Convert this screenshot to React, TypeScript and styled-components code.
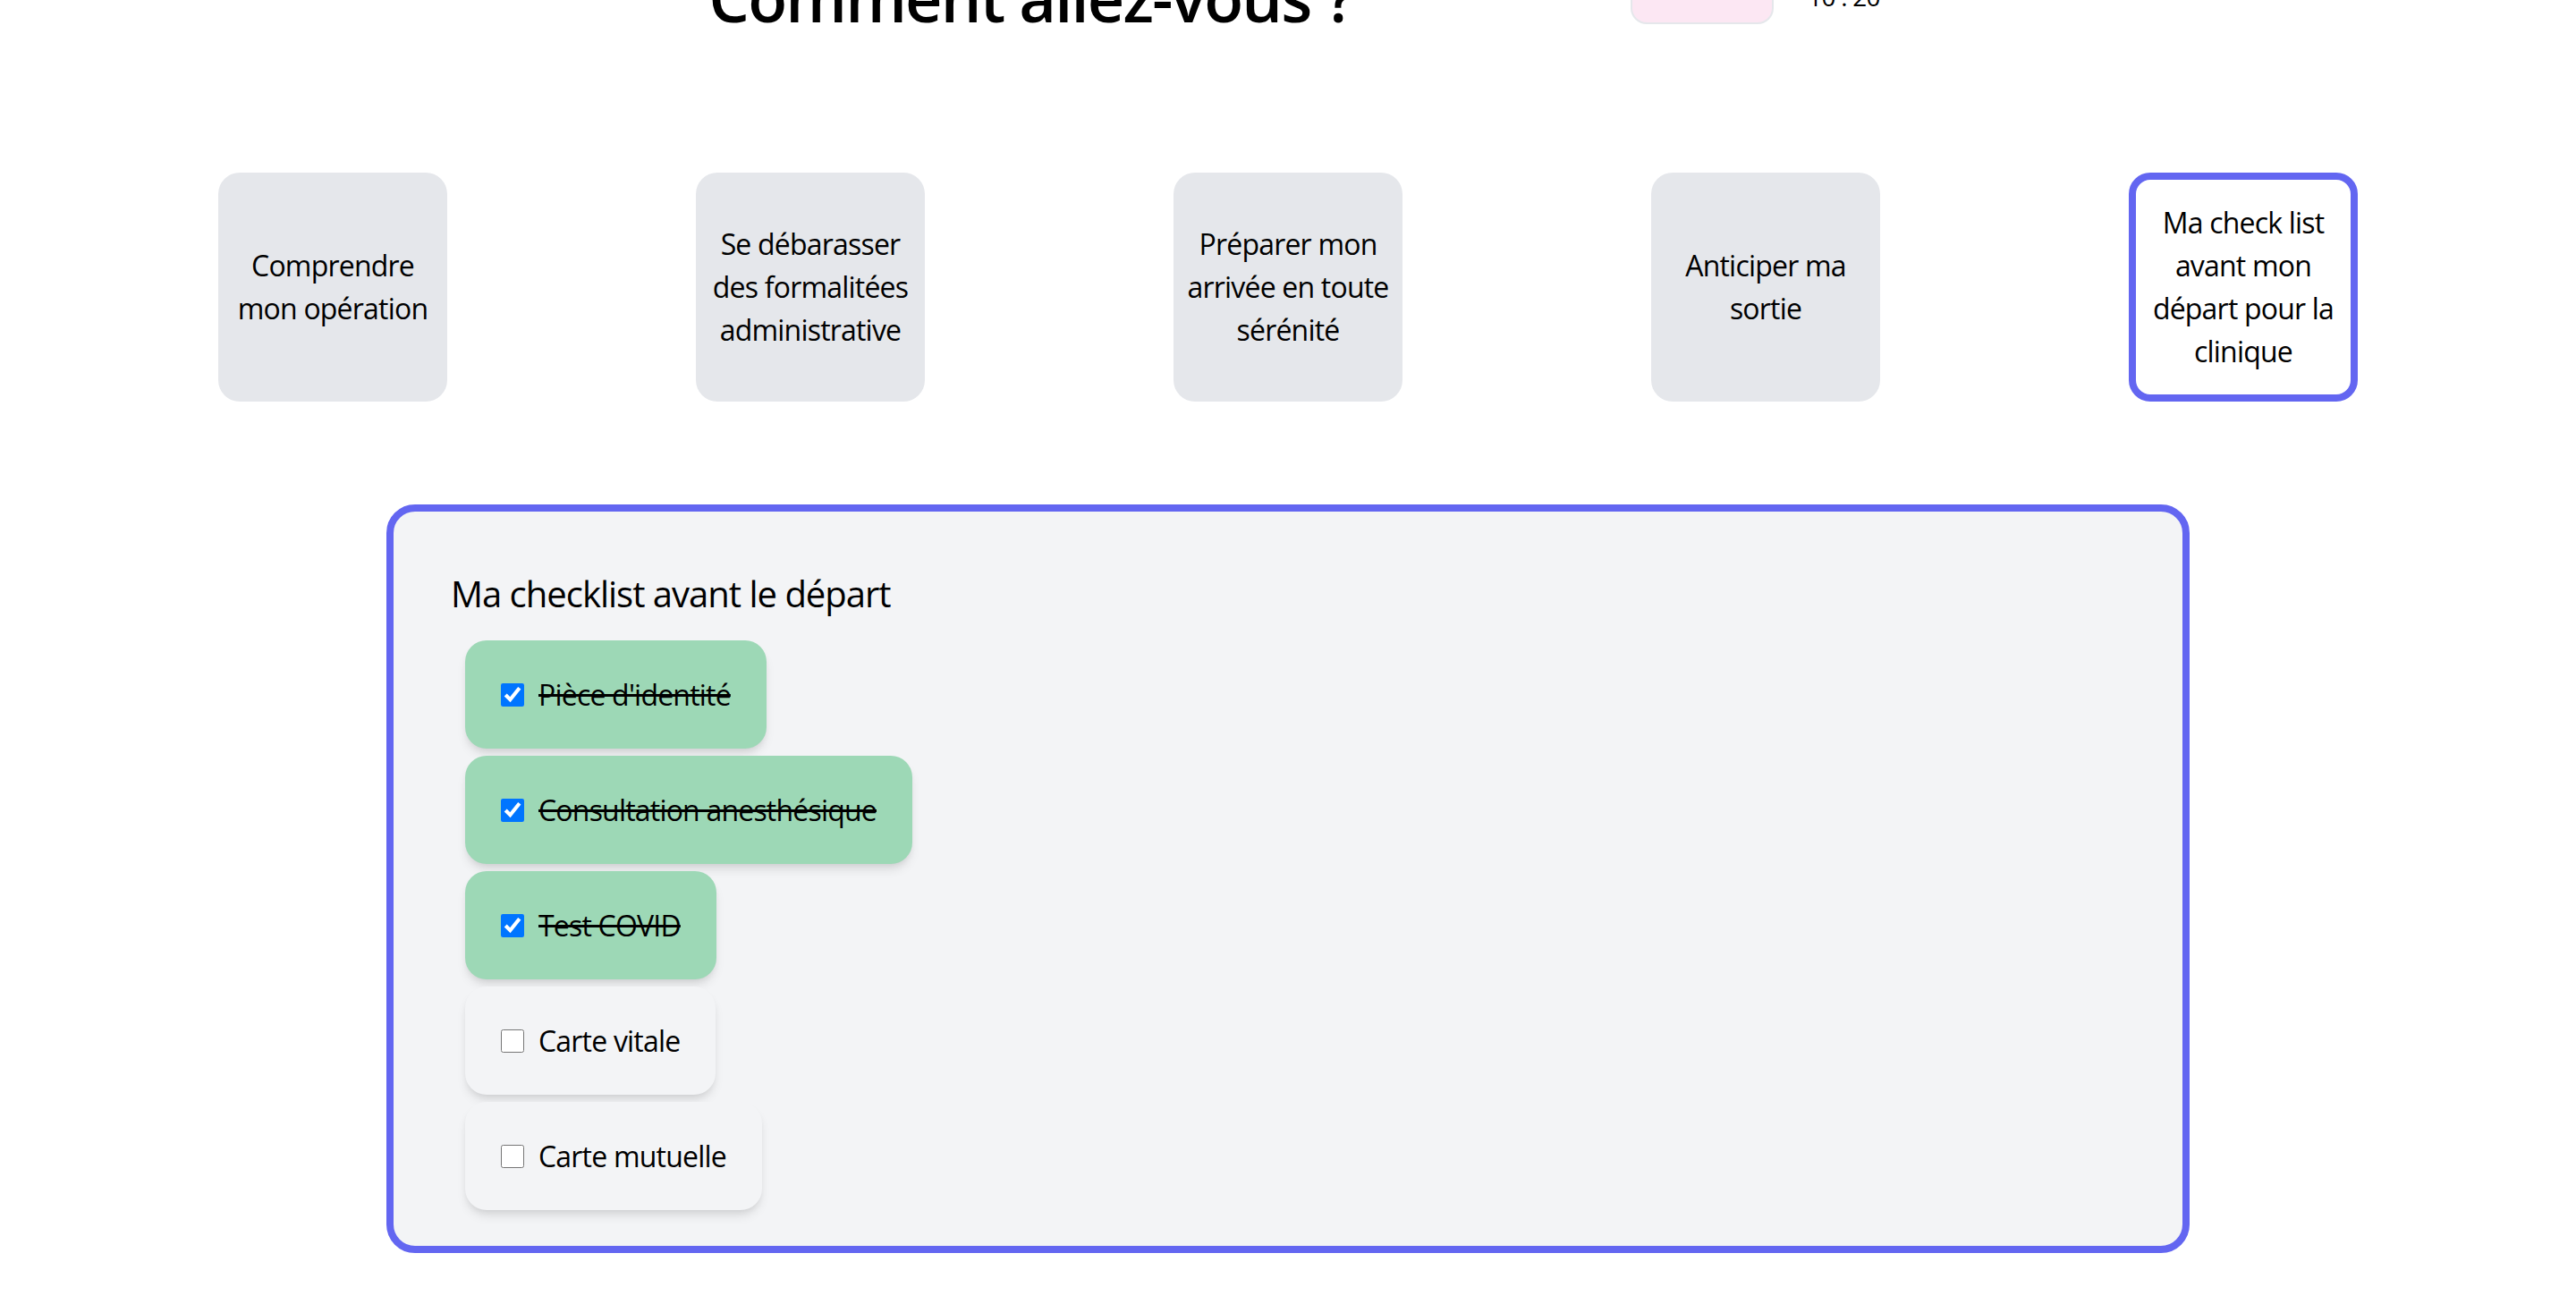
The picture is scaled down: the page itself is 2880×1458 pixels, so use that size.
import React, { useState } from 'react'
import styled, { createGlobalStyle } from 'styled-components'

const GlobalStyle = createGlobalStyle`
  html, body {
    margin: 0;
    padding: 0;
    background: #ffffff;
    font-family: 'Segoe UI', 'Open Sans', 'Noto Sans', sans-serif;
    color: #000000;
    overflow: hidden;
  }
  * {
    box-sizing: border-box;
  }
`

const Page = styled.div`
  width: 100%;
  display: flex;
  flex-direction: column;
`

const Header = styled.header`
  margin-top: -80px;
  height: 117px;
  display: flex;
  justify-content: center;
  align-items: flex-end;
`

const Title = styled.h1`
  margin: 0 310px 0 14px;
  font-size: 72px;
  line-height: 80px;
  font-weight: 600;
  letter-spacing: -1.8px;
`

const Mood = styled.div`
  width: 160px;
  height: 90px;
  margin-bottom: 10px;
  border-radius: 18px;
  background: #fce7f3;
  border: 2px solid #e5e7eb;
  border-top: none;
`

const Clock = styled.span`
  margin: 0 0 21px 38px;
  font-size: 28px;
  line-height: 40px;
  letter-spacing: -0.8px;
`

const Steps = styled.nav`
  margin-top: 156px;
  padding: 0 105px;
  display: flex;
  justify-content: space-around;
`

const Step = styled.button<{ $active?: boolean }>`
  width: 256px;
  height: 256px;
  padding: 8px;
  display: flex;
  align-items: center;
  justify-content: center;
  text-align: center;
  font-family: inherit;
  font-size: 32px;
  line-height: 48px;
  letter-spacing: -0.8px;
  color: #000;
  border-radius: 24px;
  cursor: pointer;
  background: ${(p) => (p.$active ? '#ffffff' : '#e5e7eb')};
  border: ${(p) => (p.$active ? '8px solid #6366f1' : 'none')};
`

const Panel = styled.section`
  width: 70%;
  margin: 115px auto 0;
  padding: 64px 64px 40px;
  border: 8px solid #6366f1;
  border-radius: 32px;
  background: #f3f4f6;
`

const PanelTitle = styled.h2`
  margin: 0 0 24px;
  font-size: 40px;
  line-height: 56px;
  font-weight: 400;
  letter-spacing: -1px;
`

const List = styled.div`
  margin-left: 16px;
  display: flex;
  flex-direction: column;
  align-items: flex-start;
  gap: 8px;
`

const Item = styled.label<{ $done: boolean }>`
  display: inline-flex;
  align-items: center;
  padding: 36.5px 40px;
  border-radius: 24px;
  font-size: 32px;
  line-height: 48px;
  letter-spacing: -0.8px;
  cursor: pointer;
  background: ${(p) => (p.$done ? '#9dd8b6' : '#f3f4f6')};
  box-shadow: 0 8px 12px -2px rgba(0, 0, 0, 0.1),
    0 4px 8px -4px rgba(0, 0, 0, 0.1);
  text-decoration: ${(p) => (p.$done ? 'line-through' : 'none')};
  text-decoration-thickness: 3px;
`

const Box = styled.input`
  width: 26px;
  height: 26px;
  margin: 0 16px 0 0;
  cursor: pointer;
`

const steps = [
  'Comprendre mon opération',
  'Se débarasser des formalitées administrative',
  'Préparer mon arrivée en toute sérénité',
  'Anticiper ma sortie',
  'Ma check list avant mon départ pour la clinique',
]

const initial = [
  { label: "Pièce d'identité", done: true },
  { label: 'Consultation anesthésique', done: true },
  { label: 'Test COVID', done: true },
  { label: 'Carte vitale', done: false },
  { label: 'Carte mutuelle', done: false },
]

const App = () => {
  const [active, setActive] = useState(4)
  const [items, setItems] = useState(initial)

  const toggle = (ind: number) =>
    setItems(items.map((it, i) => (i === ind ? { ...it, done: !it.done } : it)))

  return (
    <Page>
      <GlobalStyle />
      <Header>
        <Title>Comment allez-vous ?</Title>
        <Mood />
        <Clock>10 : 20</Clock>
      </Header>
      <Steps>
        {steps.map((s, ind) => (
          <Step key={ind} $active={ind === active} onClick={() => setActive(ind)}>
            {s}
          </Step>
        ))}
      </Steps>
      <Panel>
        <PanelTitle>Ma checklist avant le départ</PanelTitle>
        <List>
          {items.map((it, ind) => (
            <Item key={ind} $done={it.done}>
              <Box type='checkbox' checked={it.done} onChange={() => toggle(ind)} />
              {it.label}
            </Item>
          ))}
        </List>
      </Panel>
    </Page>
  )
}

export default App
